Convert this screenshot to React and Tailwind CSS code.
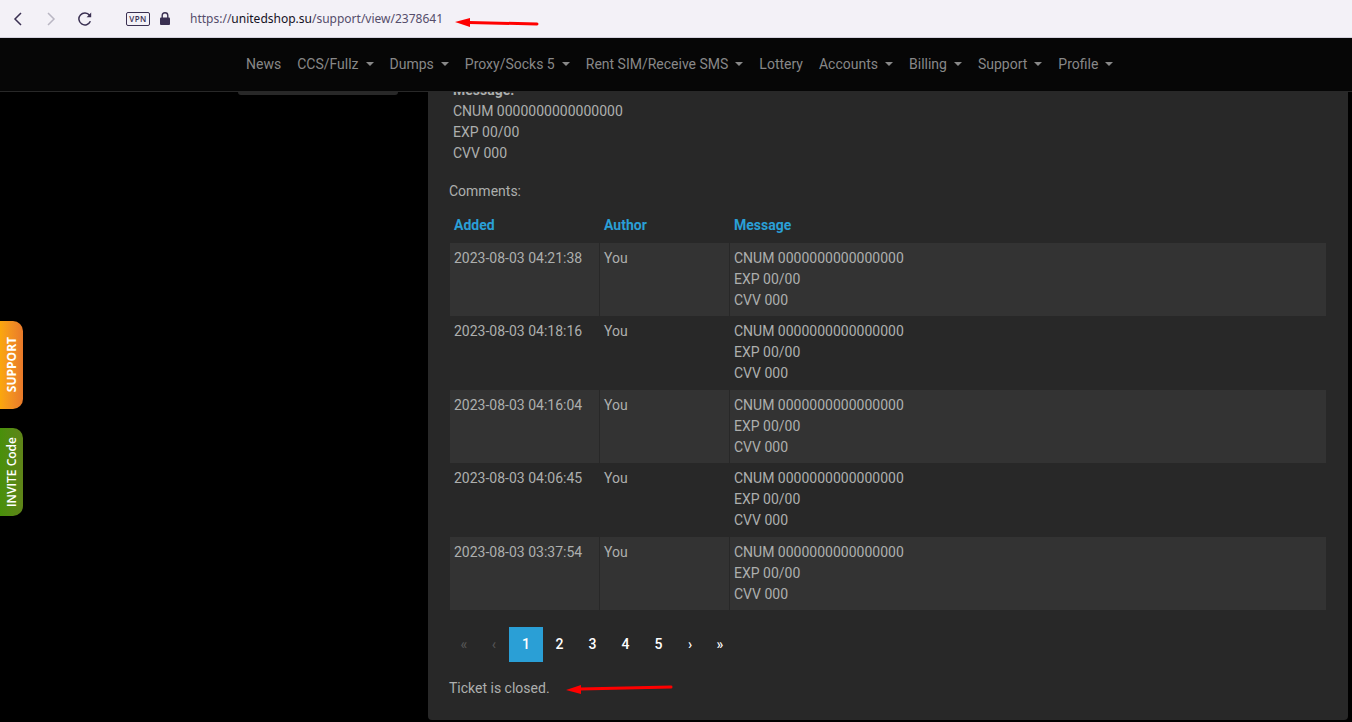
import React from 'react';
import clsx from 'clsx';

const navItems = [
  { label: 'News' },
  { label: 'CCS/Fullz', menu: true },
  { label: 'Dumps', menu: true },
  { label: 'Proxy/Socks 5', menu: true },
  { label: 'Rent SIM/Receive SMS', menu: true },
  { label: 'Lottery' },
  { label: 'Accounts', menu: true },
  { label: 'Billing', menu: true },
  { label: 'Support', menu: true },
  { label: 'Profile', menu: true },
];

// Card data is never shown, only zero-filled placeholders
const placeholder = ['CNUM 0000000000000000', 'EXP 00/00', 'CVV 000'];

const comments = [
  { added: '2023-08-03 04:21:38', author: 'You', message: placeholder },
  { added: '2023-08-03 04:18:16', author: 'You', message: placeholder },
  { added: '2023-08-03 04:16:04', author: 'You', message: placeholder },
  { added: '2023-08-03 04:06:45', author: 'You', message: placeholder },
  { added: '2023-08-03 03:37:54', author: 'You', message: placeholder },
];

const pages = ['«', '‹', '1', '2', '3', '4', '5', '›', '»'];

const Lines = ({ lines }) => lines.map((line, index) => <div key={index}>{line}</div>);

const BrowserBar = () => (
  <div className="flex h-[38px] items-center border-b border-[#d5d3df] bg-[#f3f1f7] pl-3 text-[#3a3052]">
    <button type="button" aria-label="Back" className="mr-[22px]">
      <svg width="12" height="14" viewBox="0 0 12 14" fill="none" stroke="currentColor" strokeWidth="1.5">
        <path d="M9 1 L3 7 L9 13" />
      </svg>
    </button>
    <button type="button" aria-label="Forward" className="mr-5 text-[#b9b6c3]">
      <svg width="12" height="14" viewBox="0 0 12 14" fill="none" stroke="currentColor" strokeWidth="1.5">
        <path d="M2 1 L8 7 L2 13" />
      </svg>
    </button>
    <button type="button" aria-label="Reload" className="mr-[34px]">
      <svg width="14" height="14" viewBox="0 0 14 14" fill="none" stroke="currentColor" strokeWidth="1.5">
        <path d="M12.4 9.3 A6 6 0 1 1 11.6 3.2" />
        <path d="M13.2 0.5 V5.2 H8.6 Z" fill="currentColor" stroke="none" />
      </svg>
    </button>
    <span className="mr-2.5 flex h-3.5 w-6 items-center justify-center rounded-xs border border-[#3a3052] font-['Open_Sans',sans-serif] text-[8px] font-semibold tracking-wider">
      VPN
    </span>
    <svg width="10" height="13" viewBox="0 0 10 13" className="mr-5">
      <rect x="0" y="5.5" width="10" height="7.5" rx="1" fill="currentColor" />
      <path d="M2.2 6 V3.5 A2.8 2.8 0 0 1 7.8 3.5 V6" fill="none" stroke="currentColor" strokeWidth="1.4" />
    </svg>
    <span className="font-['Noto_Sans',sans-serif] text-[12px] text-[#554d6b]">
      https://<span className="text-[#15101f]">unitedshop.su</span>/support/view/2378641
    </span>
    <svg width="84" height="12" viewBox="0 0 84 12" className="mt-2 ml-3">
      <path d="M14 5.5 L82 7" stroke="#ff0000" strokeWidth="3" strokeLinecap="round" />
      <path d="M0 5 L15 1 V10 Z" fill="#ff0000" />
    </svg>
  </div>
);

const NavBar = () => (
  <nav className="flex h-[54px] items-center border-b border-[#282828] bg-[#060606] pl-[238px] text-[#888888]">
    {navItems.map((item) => (
      <a key={item.label} href="#" className="flex items-center px-2 whitespace-nowrap">
        {item.label}
        {item.menu && (
          <span className="mb-0.5 ml-[7px] border-x-4 border-t-4 border-x-transparent border-t-[#888888]"></span>
        )}
      </a>
    ))}
  </nav>
);

const CommentsTable = () => (
  <table className="w-full table-fixed border-separate border-spacing-x-px border-spacing-y-0 text-left">
    <colgroup>
      <col className="w-[149px]" />
      <col className="w-[129px]" />
      <col />
    </colgroup>
    <thead>
      <tr className="text-[#2a9fd6]">
        <th className="px-1 pb-[7px] font-bold">Added</th>
        <th className="px-1 pb-[7px] font-bold">Author</th>
        <th className="px-1 pb-[7px] font-bold">Message</th>
      </tr>
    </thead>
    <tbody>
      {comments.map((comment, index) => {
        const cell = clsx('px-1 align-top', index % 2 === 0 ? 'bg-[#333333] py-[5px]' : 'pt-[5px] pb-1.5');
        return (
          <tr key={comment.added}>
            <td className={cell}>{comment.added}</td>
            <td className={cell}>{comment.author}</td>
            <td className={cell}>
              <Lines lines={comment.message} />
            </td>
          </tr>
        );
      })}
    </tbody>
  </table>
);

const Pagination = () => (
  <div className="mt-[17px] flex h-[35px] font-medium text-white">
    {pages.map((page, index) => (
      <button
        key={page}
        type="button"
        disabled={index < 2}
        className={clsx(
          'flex items-center justify-center',
          index < 2 || index > 6 ? 'w-[30px]' : page === '1' ? 'w-[34px]' : 'w-[33px]',
          index < 2 && 'text-[#555555]',
          page === '1' && 'bg-[#2a9fd6]'
        )}
      >
        {page}
      </button>
    ))}
  </div>
);

const SideTabs = () => (
  <div className="absolute top-[321px] left-0 flex flex-col gap-[19px] font-['Open_Sans',sans-serif] text-[12px] text-white">
    <button
      type="button"
      className="flex h-[88px] w-[23px] items-center justify-center rounded-r-[10px] bg-linear-to-r from-[#fba70b] to-[#e8792a] font-bold"
    >
      <span className="rotate-180 [writing-mode:vertical-rl]">SUPPORT</span>
    </button>
    <button
      type="button"
      className="flex h-[88px] w-[23px] items-center justify-center rounded-r-[10px] bg-linear-to-r from-[#48900a] to-[#5f8418] font-semibold"
    >
      <span className="rotate-180 whitespace-nowrap [writing-mode:vertical-rl]">INVITE Code</span>
    </button>
  </div>
);

const App = () => {
  return (
    <div className="relative flex h-screen flex-col overflow-hidden bg-black font-['Roboto',sans-serif] text-[14px] leading-[21px] text-[#adafae]">
      <BrowserBar />
      <NavBar />

      <div className="flex min-h-0 flex-1 items-start gap-[30px] overflow-hidden pr-1 pl-[238px]">
        {/* End of the side menu, scrolled under the nav */}
        <aside className="h-[3px] w-40 shrink-0 rounded-b bg-[#282828]"></aside>

        <main className="-mt-3 min-w-0 flex-1 rounded-b bg-[#282828] px-[21px] pb-[21px]">
          <div className="pl-1">
            <div className="font-bold">Message:</div>
            <Lines lines={placeholder} />
          </div>
          <p className="mt-[17px] mb-[13px]">Comments:</p>
          <CommentsTable />
          <Pagination />
          <div className="mt-4 flex items-center">
            <span>Ticket is closed.</span>
            <svg width="108" height="12" viewBox="0 0 108 12" className="ml-4">
              <path d="M14 6 L105 4" stroke="#ff0000" strokeWidth="3" strokeLinecap="round" />
              <path d="M0 7 L15 2 V11 Z" fill="#ff0000" />
            </svg>
          </div>
        </main>
      </div>

      <SideTabs />
    </div>
  );
};

export default App;
